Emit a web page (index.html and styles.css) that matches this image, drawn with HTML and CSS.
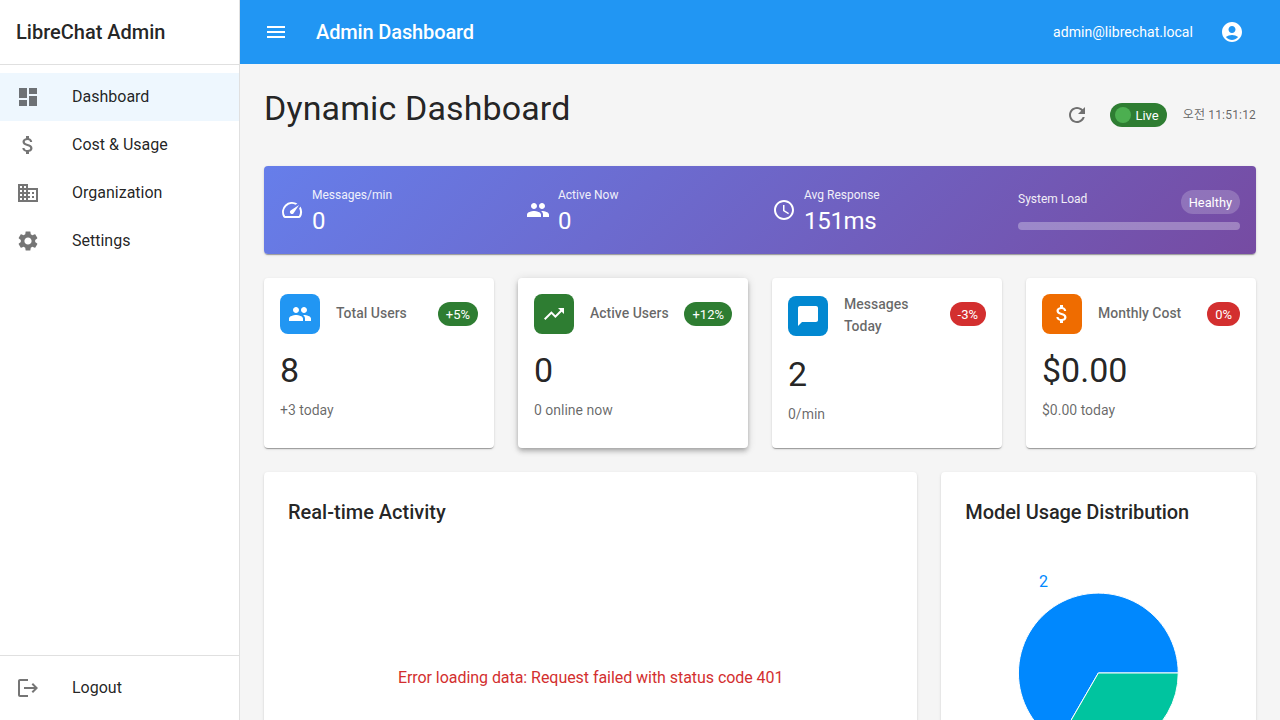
FILE: index.html
```html
<!DOCTYPE html>
<html lang="en">
<head>
    <meta charset="UTF-8" />
    <meta name="viewport" content="width=device-width, initial-scale=1.0" />
    <title>LibreChat Admin</title>
    <link rel="stylesheet" href="styles.css">
</head>
<body>
    <div class="app">
        <aside class="sidebar">
            <div class="brand">LibreChat Admin</div>
            <nav class="nav-list">
                <a class="nav-item selected" href="#">
                    <svg class="nav-icon" viewBox="0 0 24 24"><path d="M3 13h8V3H3v10zm0 8h8v-6H3v6zm10 0h8V11h-8v10zm0-18v6h8V3h-8z"/></svg>
                    <span>Dashboard</span>
                </a>
                <a class="nav-item" href="#">
                    <svg class="nav-icon" viewBox="0 0 24 24"><path d="M11.8 10.9c-2.27-.59-3-1.2-3-2.15 0-1.09 1.01-1.85 2.7-1.85 1.78 0 2.44.85 2.5 2.1h2.21c-.07-1.72-1.12-3.3-3.21-3.81V3h-3v2.16c-1.94.42-3.5 1.68-3.5 3.61 0 2.31 1.91 3.46 4.7 4.13 2.5.6 3 1.48 3 2.41 0 .69-.49 1.79-2.7 1.79-2.06 0-2.87-.92-2.98-2.1h-2.2c.12 2.19 1.76 3.42 3.68 3.83V21h3v-2.15c1.95-.37 3.5-1.5 3.5-3.55 0-2.84-2.43-3.81-4.7-4.4z"/></svg>
                    <span>Cost &amp; Usage</span>
                </a>
                <a class="nav-item" href="#">
                    <svg class="nav-icon" viewBox="0 0 24 24"><path d="M12 7V3H2v18h20V7H12zM6 19H4v-2h2v2zm0-4H4v-2h2v2zm0-4H4V9h2v2zm0-4H4V5h2v2zm4 12H8v-2h2v2zm0-4H8v-2h2v2zm0-4H8V9h2v2zm0-4H8V5h2v2zm10 12h-8v-2h2v-2h-2v-2h2v-2h-2V9h8v10zm-2-8h-2v2h2v-2zm0 4h-2v2h2v-2z"/></svg>
                    <span>Organization</span>
                </a>
                <a class="nav-item" href="#">
                    <svg class="nav-icon" viewBox="0 0 24 24"><path d="M19.14 12.94c.04-.3.06-.61.06-.94 0-.32-.02-.64-.07-.94l2.03-1.58c.18-.14.23-.41.12-.61l-1.92-3.32c-.12-.22-.37-.29-.59-.22l-2.39.96c-.5-.38-1.03-.7-1.62-.94l-.36-2.54c-.04-.24-.24-.41-.48-.41h-3.84c-.24 0-.43.17-.47.41l-.36 2.54c-.59.24-1.13.57-1.62.94l-2.39-.96c-.22-.08-.47 0-.59.22L2.74 8.87c-.12.21-.08.47.12.61l2.03 1.58c-.05.3-.09.63-.09.94s.02.64.07.94l-2.03 1.58c-.18.14-.23.41-.12.61l1.92 3.32c.12.22.37.29.59.22l2.39-.96c.5.38 1.03.7 1.62.94l.36 2.54c.05.24.24.41.48.41h3.84c.24 0 .44-.17.47-.41l.36-2.54c.59-.24 1.13-.56 1.62-.94l2.39.96c.22.08.47 0 .59-.22l1.92-3.32c.12-.22.07-.47-.12-.61l-2.01-1.58zM12 15.6c-1.98 0-3.6-1.62-3.6-3.6s1.62-3.6 3.6-3.6 3.6 1.62 3.6 3.6-1.62 3.6-3.6 3.6z"/></svg>
                    <span>Settings</span>
                </a>
            </nav>
            <div class="nav-list logout-box">
                <a class="nav-item" href="#">
                    <svg class="nav-icon" viewBox="0 0 24 24"><path d="m17 7-1.41 1.41L18.17 11H8v2h10.17l-2.58 2.58L17 17l5-5zM4 5h8V3H4c-1.1 0-2 .9-2 2v14c0 1.1.9 2 2 2h8v-2H4V5z"/></svg>
                    <span>Logout</span>
                </a>
            </div>
        </aside>

        <div class="content">
            <header class="topbar">
                <button class="icon-btn">
                    <svg viewBox="0 0 24 24"><path d="M3 18h18v-2H3v2zm0-5h18v-2H3v2zm0-7v2h18V6H3z"/></svg>
                </button>
                <div class="topbar-title">Admin Dashboard</div>
                <div class="topbar-email">admin@librechat.local</div>
                <button class="icon-btn">
                    <svg viewBox="0 0 24 24"><path d="M12 2C6.48 2 2 6.48 2 12s4.48 10 10 10 10-4.48 10-10S17.52 2 12 2zm0 4c1.93 0 3.5 1.57 3.5 3.5S13.93 13 12 13s-3.5-1.57-3.5-3.5S10.07 6 12 6zm0 14c-2.03 0-4.43-.82-6.14-2.88C7.55 15.8 9.68 15 12 15s4.45.8 6.14 2.12C16.43 19.18 14.03 20 12 20z"/></svg>
                </button>
            </header>

            <main class="main">
                <div class="page-head">
                    <h1>Dynamic Dashboard</h1>
                    <div class="page-controls">
                        <button class="refresh-btn">
                            <svg viewBox="0 0 24 24"><path d="M17.65 6.35C16.2 4.9 14.21 4 12 4c-4.42 0-7.99 3.58-7.99 8s3.57 8 7.99 8c3.73 0 6.84-2.55 7.73-6h-2.08c-.82 2.33-3.04 4-5.65 4-3.31 0-6-2.69-6-6s2.69-6 6-6c1.66 0 3.14.69 4.22 1.78L13 11h7V4l-2.35 2.35z"/></svg>
                        </button>
                        <div class="live-chip"><span class="live-dot"></span>Live</div>
                        <div class="clock">오전 11:51:12</div>
                    </div>
                </div>

                <section class="banner">
                    <div class="banner-stat">
                        <svg viewBox="0 0 24 24"><path d="M20.38 8.57l-1.23 1.85a8 8 0 0 1-.22 7.58H5.07A8 8 0 0 1 15.58 6.85l1.85-1.23A10 10 0 0 0 3.35 19a2 2 0 0 0 1.72 1h13.85a2 2 0 0 0 1.74-1 10 10 0 0 0-.27-10.44zm-9.79 6.84a2 2 0 0 0 2.83 0l5.66-8.49-8.49 5.66a2 2 0 0 0 0 2.83z"/></svg>
                        <div class="banner-text">
                            <div class="banner-label">Messages/min</div>
                            <div class="banner-value">0</div>
                        </div>
                    </div>
                    <div class="banner-stat">
                        <svg viewBox="0 0 24 24"><path d="M16 11c1.66 0 2.99-1.34 2.99-3S17.66 5 16 5c-1.66 0-3 1.34-3 3s1.34 3 3 3zm-8 0c1.66 0 2.99-1.34 2.99-3S9.66 5 8 5C6.34 5 5 6.34 5 8s1.34 3 3 3zm0 2c-2.33 0-7 1.17-7 3.5V19h14v-2.5c0-2.33-4.67-3.5-7-3.5zm8 0c-.29 0-.62.02-.97.05 1.16.84 1.97 1.97 1.97 3.45V19h6v-2.5c0-2.33-4.67-3.5-7-3.5z"/></svg>
                        <div class="banner-text">
                            <div class="banner-label">Active Now</div>
                            <div class="banner-value">0</div>
                        </div>
                    </div>
                    <div class="banner-stat">
                        <svg viewBox="0 0 24 24"><path d="M11.99 2C6.47 2 2 6.48 2 12s4.47 10 9.99 10C17.52 22 22 17.52 22 12S17.52 2 11.99 2zM12 20c-4.42 0-8-3.58-8-8s3.58-8 8-8 8 3.58 8 8-3.58 8-8 8zm.5-13H11v6l5.25 3.15.75-1.23-4.5-2.67z"/></svg>
                        <div class="banner-text">
                            <div class="banner-label">Avg Response</div>
                            <div class="banner-value">151ms</div>
                        </div>
                    </div>
                    <div class="banner-load">
                        <div class="load-head">
                            <div class="banner-label load-label">System Load</div>
                            <div class="healthy-chip">Healthy</div>
                        </div>
                        <div class="load-bar"></div>
                    </div>
                </section>

                <section class="stat-grid">
                    <div class="stat-card">
                        <div class="stat-head">
                            <div class="stat-icon blue">
                                <svg viewBox="0 0 24 24"><path d="M16 11c1.66 0 2.99-1.34 2.99-3S17.66 5 16 5c-1.66 0-3 1.34-3 3s1.34 3 3 3zm-8 0c1.66 0 2.99-1.34 2.99-3S9.66 5 8 5C6.34 5 5 6.34 5 8s1.34 3 3 3zm0 2c-2.33 0-7 1.17-7 3.5V19h14v-2.5c0-2.33-4.67-3.5-7-3.5zm8 0c-.29 0-.62.02-.97.05 1.16.84 1.97 1.97 1.97 3.45V19h6v-2.5c0-2.33-4.67-3.5-7-3.5z"/></svg>
                            </div>
                            <div class="stat-title">Total Users</div>
                            <div class="trend up">+5%</div>
                        </div>
                        <div class="stat-value">8</div>
                        <div class="stat-sub">+3 today</div>
                    </div>
                    <div class="stat-card raised">
                        <div class="stat-head">
                            <div class="stat-icon green">
                                <svg viewBox="0 0 24 24"><path d="M16 6l2.29 2.29-4.88 4.88-4-4L2 16.59 3.41 18l6-6 4 4 6.3-6.29L22 12V6z"/></svg>
                            </div>
                            <div class="stat-title">Active Users</div>
                            <div class="trend up">+12%</div>
                        </div>
                        <div class="stat-value">0</div>
                        <div class="stat-sub">0 online now</div>
                    </div>
                    <div class="stat-card">
                        <div class="stat-head">
                            <div class="stat-icon sky">
                                <svg viewBox="0 0 24 24"><path d="M20 2H4c-1.1 0-2 .9-2 2v18l4-4h14c1.1 0 2-.9 2-2V4c0-1.1-.9-2-2-2z"/></svg>
                            </div>
                            <div class="stat-title">Messages Today</div>
                            <div class="trend down">-3%</div>
                        </div>
                        <div class="stat-value">2</div>
                        <div class="stat-sub">0/min</div>
                    </div>
                    <div class="stat-card">
                        <div class="stat-head">
                            <div class="stat-icon orange">
                                <svg viewBox="0 0 24 24"><path d="M11.8 10.9c-2.27-.59-3-1.2-3-2.15 0-1.09 1.01-1.85 2.7-1.85 1.78 0 2.44.85 2.5 2.1h2.21c-.07-1.72-1.12-3.3-3.21-3.81V3h-3v2.16c-1.94.42-3.5 1.68-3.5 3.61 0 2.31 1.91 3.46 4.7 4.13 2.5.6 3 1.48 3 2.41 0 .69-.49 1.79-2.7 1.79-2.06 0-2.87-.92-2.98-2.1h-2.2c.12 2.19 1.76 3.42 3.68 3.83V21h3v-2.15c1.95-.37 3.5-1.5 3.5-3.55 0-2.84-2.43-3.81-4.7-4.4z"/></svg>
                            </div>
                            <div class="stat-title">Monthly Cost</div>
                            <div class="trend down">0%</div>
                        </div>
                        <div class="stat-value">$0.00</div>
                        <div class="stat-sub">$0.00 today</div>
                    </div>
                </section>

                <section class="chart-grid">
                    <div class="chart-card wide">
                        <h2>Real-time Activity</h2>
                        <div class="chart-box error-box">Error loading data: Request failed with status code 401</div>
                    </div>
                    <div class="chart-card narrow">
                        <h2>Model Usage Distribution</h2>
                        <svg class="chart-box pie" viewBox="0 0 267 300">
                            <path class="slice-blue" d="M133.5 145 L213.5 145 A80 80 0 1 0 93.5 214.3 Z"/>
                            <path class="slice-teal" d="M133.5 145 L93.5 214.3 A80 80 0 0 0 213.5 145 Z"/>
                            <text class="pie-label" x="74" y="59">2</text>
                        </svg>
                    </div>
                </section>
            </main>
        </div>
    </div>
</body>
</html>
```

FILE: styles.css
```css
* {
    box-sizing: border-box;
}

html, body {
    height: 100%;
    margin: 0;
    overflow: hidden;
}

body {
    font-family: Roboto, "Noto Sans CJK KR", sans-serif;
    background-color: #f5f5f5;
    color: rgba(0, 0, 0, 0.87);
}

svg {
    display: block;
    fill: currentColor;
}

button {
    border: none;
    background: none;
    cursor: pointer;
}

.app {
    display: flex;
    height: 100vh;
}

/* sidebar */
.sidebar {
    width: 240px;
    flex-shrink: 0;
    display: flex;
    flex-direction: column;
    background-color: #ffffff;
    border-right: 1px solid rgba(0, 0, 0, 0.12);
}

.brand {
    height: 65px;
    padding-left: 16px;
    display: flex;
    align-items: center;
    font-size: 20px;
    font-weight: 500;
    border-bottom: 1px solid rgba(0, 0, 0, 0.12);
}

.nav-list {
    padding: 8px 0;
}

.logout-box {
    margin-top: auto;
    border-top: 1px solid rgba(0, 0, 0, 0.12);
}

.nav-item {
    height: 48px;
    padding: 0 16px;
    display: flex;
    align-items: center;
    font-size: 16px;
    color: rgba(0, 0, 0, 0.87);
    text-decoration: none;
}

.nav-item span {
    padding-bottom: 2px;
}

.nav-item.selected {
    background-color: rgba(33, 150, 243, 0.08);
}

.nav-icon {
    width: 24px;
    height: 24px;
    margin-right: 32px;
    color: rgba(0, 0, 0, 0.54);
}

/* top bar */
.content {
    flex: 1;
    min-width: 0;
    display: flex;
    flex-direction: column;
}

.topbar {
    height: 64px;
    flex-shrink: 0;
    padding: 0 24px 0 12px;
    display: flex;
    align-items: center;
    background-color: #2196f3;
    color: #ffffff;
}

.icon-btn {
    padding: 12px;
    color: #ffffff;
}

.icon-btn svg, .refresh-btn svg {
    width: 24px;
    height: 24px;
}

.topbar-title {
    flex: 1;
    margin-left: 16px;
    font-size: 20px;
    font-weight: 500;
    letter-spacing: -0.13px;
}

.topbar-email {
    margin-right: 15px;
    font-size: 14px;
    letter-spacing: 0.05px;
}

/* page */
.main {
    flex: 1;
    min-height: 0;
    padding: 24px;
}

.page-head {
    display: flex;
    justify-content: space-between;
    align-items: center;
    margin-bottom: 24px;
}

.page-head h1 {
    margin: 0 0 14px;
    font-size: 34px;
    font-weight: 400;
    line-height: 40px;
    letter-spacing: 0.12px;
}

.page-controls {
    display: flex;
    align-items: center;
    gap: 16px;
}

.refresh-btn {
    padding: 5px;
    color: rgba(0, 0, 0, 0.54);
}

.live-chip {
    height: 24px;
    padding: 0 8px 0 5px;
    display: flex;
    align-items: center;
    gap: 4px;
    border-radius: 12px;
    background-color: #2e7d32;
    color: #ffffff;
    font-size: 13px;
}

.live-dot {
    width: 16px;
    height: 16px;
    border-radius: 50%;
    background-color: #4caf50;
}

.clock {
    padding-bottom: 4px;
    font-size: 12px;
    letter-spacing: 0.18px;
    color: rgba(0, 0, 0, 0.6);
}

/* gradient banner */
.banner {
    display: grid;
    grid-template-columns: repeat(4, 1fr);
    gap: 24px;
    align-items: center;
    height: 88px;
    padding: 0 16px;
    margin-bottom: 24px;
    border-radius: 4px;
    background: linear-gradient(135deg, #667eea 0%, #764ba2 100%);
    color: #ffffff;
    box-shadow: 0 2px 1px -1px rgba(0, 0, 0, 0.2), 0 1px 1px rgba(0, 0, 0, 0.14), 0 1px 3px rgba(0, 0, 0, 0.12);
}

.banner-stat {
    display: flex;
    align-items: center;
    gap: 8px;
}

.banner-stat svg {
    width: 24px;
    height: 24px;
}

.banner-text {
    padding-top: 2px;
}

.banner-label {
    font-size: 12px;
    line-height: 20px;
    opacity: 0.9;
}

.load-label {
    margin-top: -1px;
}

.banner-value {
    font-size: 24px;
    line-height: 33px;
    letter-spacing: -0.3px;
}

.load-head {
    display: flex;
    justify-content: space-between;
    align-items: flex-start;
    margin-bottom: 8px;
}

.healthy-chip {
    height: 24px;
    padding: 0 8px;
    display: flex;
    align-items: center;
    border-radius: 12px;
    background-color: rgba(255, 255, 255, 0.2);
    font-size: 12.8px;
}

.load-bar {
    height: 8px;
    border-radius: 4px;
    background-color: rgba(255, 255, 255, 0.3);
}

/* stat cards */
.stat-grid {
    display: grid;
    grid-template-columns: repeat(4, 1fr);
    gap: 24px;
    margin-bottom: 24px;
}

.stat-card {
    padding: 16px 16px 24px;
    border-radius: 4px;
    background-color: #ffffff;
    box-shadow: 0 2px 1px -1px rgba(0, 0, 0, 0.2), 0 1px 1px rgba(0, 0, 0, 0.14), 0 1px 3px rgba(0, 0, 0, 0.12);
}

.stat-card.raised {
    box-shadow: 0 2px 4px -1px rgba(0, 0, 0, 0.2), 0 4px 5px rgba(0, 0, 0, 0.14), 0 1px 10px rgba(0, 0, 0, 0.12);
}

.stat-head {
    display: flex;
    align-items: center;
    margin-bottom: 16px;
}

.stat-icon {
    width: 40px;
    height: 40px;
    flex-shrink: 0;
    margin-right: 16px;
    display: flex;
    align-items: center;
    justify-content: center;
    border-radius: 8px;
    color: #ffffff;
}

.stat-icon svg {
    width: 24px;
    height: 24px;
}

.stat-icon.blue { background-color: #2196f3; }
.stat-icon.green { background-color: #2e7d32; }
.stat-icon.sky { background-color: #0288d1; }
.stat-icon.orange { background-color: #ef6c00; }

.stat-title {
    flex: 1;
    padding-right: 8px;
    font-size: 14px;
    font-weight: 500;
    line-height: 22px;
    color: rgba(0, 0, 0, 0.6);
    transform: translateY(-1px);
}

.trend {
    height: 24px;
    padding: 0 8px;
    margin-top: 8px;
    align-self: flex-start;
    display: flex;
    align-items: center;
    border-radius: 12px;
    color: #ffffff;
    font-size: 13px;
}

.trend.up { background-color: #2e7d32; }
.trend.down { background-color: #d32f2f; }

.stat-value {
    font-size: 34px;
    line-height: 40px;
    margin-bottom: 10px;
}

.stat-sub {
    font-size: 14px;
    line-height: 20px;
    color: rgba(0, 0, 0, 0.6);
}

/* chart cards */
.chart-grid {
    display: grid;
    grid-template-columns: repeat(12, 1fr);
    gap: 24px;
}

.chart-card {
    padding: 24px;
    border-radius: 4px;
    background-color: #ffffff;
    box-shadow: 0 2px 1px -1px rgba(0, 0, 0, 0.2), 0 1px 1px rgba(0, 0, 0, 0.14), 0 1px 3px rgba(0, 0, 0, 0.12);
}

.chart-card.wide { grid-column: span 8; }
.chart-card.narrow { grid-column: span 4; }

.chart-card h2 {
    margin: 0;
    font-size: 20px;
    font-weight: 500;
    line-height: 32px;
}

.chart-card.narrow h2 {
    letter-spacing: -0.09px;
}

.chart-box {
    width: 100%;
    height: 300px;
}

.error-box {
    display: flex;
    align-items: center;
    justify-content: center;
    padding-bottom: 2px;
    color: #d32f2f;
    font-size: 16px;
    letter-spacing: -0.05px;
}

.slice-blue {
    fill: #0088fe;
    stroke: #ffffff;
}

.slice-teal {
    fill: #00c49f;
    stroke: #ffffff;
}

.pie-label {
    fill: #0088fe;
    font-size: 16px;
}
```
